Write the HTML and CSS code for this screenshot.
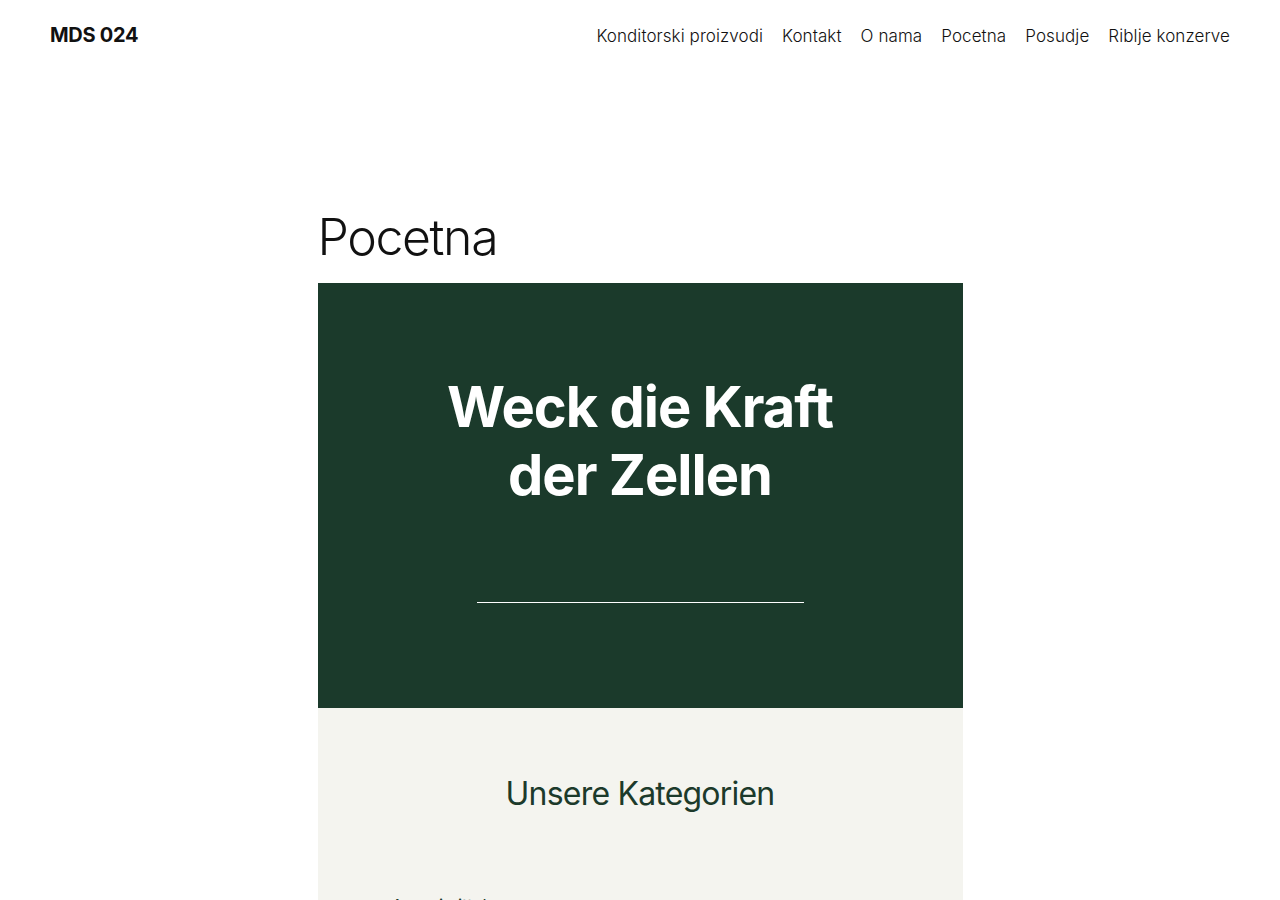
FILE: index.html
```html
<!DOCTYPE html>
<html lang="hr">
<head>
<meta charset="utf-8">
<title>Pocetna – MDS 024</title>
<link rel="stylesheet" href="styles.css">
</head>
<body>
<header class="site-header">
  <a class="logo" href="#">MDS 024</a>
  <nav class="nav">
    <a href="#">Konditorski proizvodi</a>
    <a href="#">Kontakt</a>
    <a href="#">O nama</a>
    <a href="#">Pocetna</a>
    <a href="#">Posudje</a>
    <a href="#">Riblje konzerve</a>
  </nav>
</header>
<main class="main">
  <h1 class="page-title">Pocetna</h1>
  <section class="hero">
    <h2 class="hero-title">Weck die Kraft<br>der Zellen</h2>
    <hr class="hero-line">
  </section>
  <section class="cats">
    <h2 class="cats-title">Unsere Kategorien</h2>
    <ul class="cats-list">
      <li>Arzneimittel</li>
    </ul>
  </section>
</main>
</body>
</html>
```

FILE: styles.css
```css
html, body {
  margin: 0;
  padding: 0;
  background: #ffffff;
}
body {
  font-family: Inter, "Noto Sans", sans-serif;
  color: #111111;
}
a {
  color: inherit;
  text-decoration: none;
}
.site-header {
  display: flex;
  justify-content: space-between;
  align-items: center;
  height: 70px;
  padding: 0 50px;
}
.logo {
  font-weight: 700;
  font-size: 20px;
  letter-spacing: -0.3px;
}
.nav {
  display: flex;
  gap: 19px;
  font-size: 17px;
  font-weight: 300;
  letter-spacing: 0.08px;
  padding-top: 1px;
}
.main {
  width: 645px;
  margin: 0 auto;
  padding-top: 140px;
}
.page-title {
  margin: 0 0 18px;
  font-size: 50px;
  font-weight: 300;
  letter-spacing: -1.4px;
  line-height: 1.1;
}
.hero {
  background: #1b3a2b;
  height: 425px;
  display: flex;
  flex-direction: column;
  align-items: center;
  padding-top: 90px;
  box-sizing: border-box;
}
.hero-title {
  margin: 0;
  color: #ffffff;
  font-size: 56px;
  font-weight: 700;
  line-height: 68px;
  text-align: center;
  letter-spacing: -1.0px;
}
.hero-line {
  width: 327px;
  margin: 93px 0 0;
  border: 0;
  border-top: 1px solid #ffffff;
  height: 0;
}
.cats {
  background: #f4f4ef;
  padding: 66px 0 0;
  min-height: 300px;
}
.cats-title {
  margin: 0;
  text-align: center;
  font-size: 32px;
  font-weight: 400;
  color: #1c3a2b;
  letter-spacing: -0.8px;
}
.cats-list {
  margin: 83px 0 0;
  padding-left: 74px;
  font-size: 17px;
  color: #1c3a2b;
}
```
